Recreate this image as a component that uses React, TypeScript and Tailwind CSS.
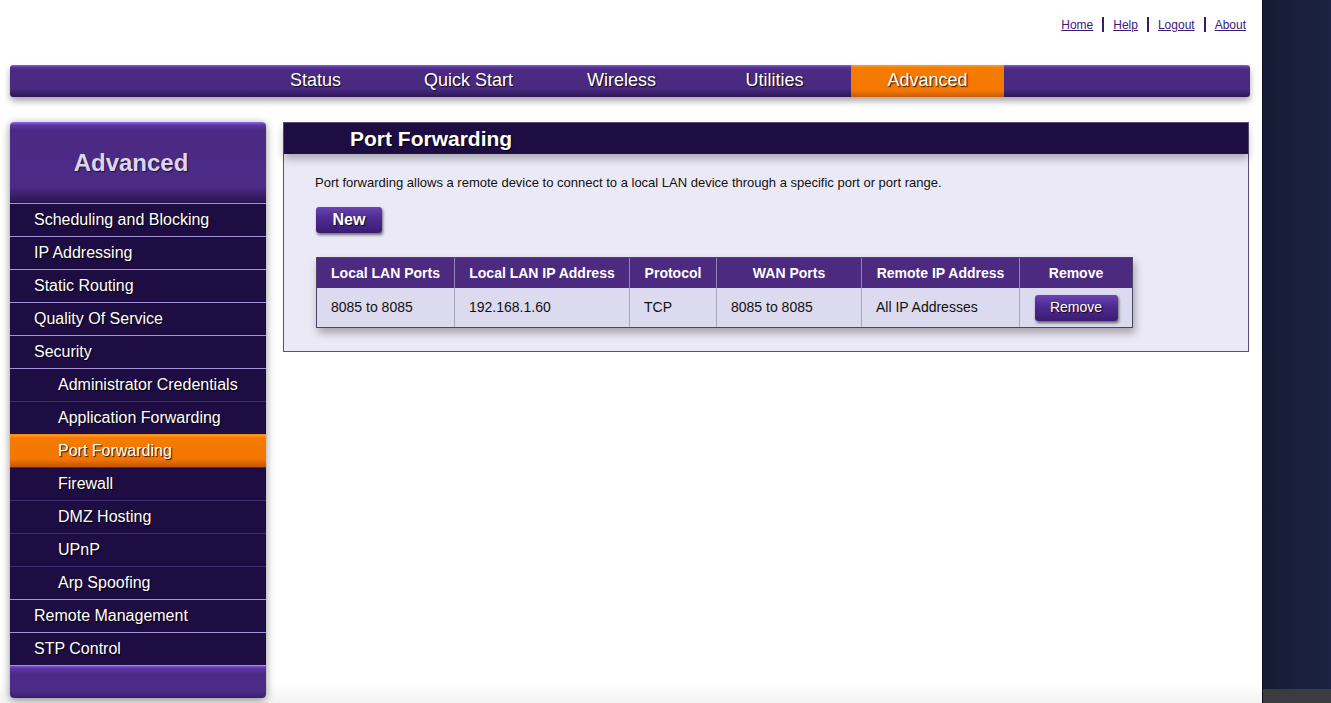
import React from "react";

type MenuItem = { label: string; sub?: boolean; active?: boolean };

const topLinks = ["Home", "Help", "Logout", "About"];

const tabs = ["Status", "Quick Start", "Wireless", "Utilities", "Advanced"];

const menu: MenuItem[] = [
  { label: "Scheduling and Blocking" },
  { label: "IP Addressing" },
  { label: "Static Routing" },
  { label: "Quality Of Service" },
  { label: "Security" },
  { label: "Administrator Credentials", sub: true },
  { label: "Application Forwarding", sub: true },
  { label: "Port Forwarding", sub: true, active: true },
  { label: "Firewall", sub: true },
  { label: "DMZ Hosting", sub: true },
  { label: "UPnP", sub: true },
  { label: "Arp Spoofing", sub: true },
  { label: "Remote Management" },
  { label: "STP Control" },
];

const columns = [
  { title: "Local LAN Ports", w: "w-[138px]" },
  { title: "Local LAN IP Address", w: "w-[175px]" },
  { title: "Protocol", w: "w-[87px]" },
  { title: "WAN Ports", w: "w-[145px]" },
  { title: "Remote IP Address", w: "w-[158px]" },
  { title: "Remove", w: "w-[112px]" },
];

const row = ["8085 to 8085", "192.168.1.60", "TCP", "8085 to 8085", "All IP Addresses"];

const shadowText = "[text-shadow:1px_1px_1px_rgba(0,0,0,0.85)]";

function PurpleButton({ label, className }: { label: string; className: string }) {
  return (
    <button
      className={`flex items-center justify-center rounded-[3px] bg-[linear-gradient(to_bottom,#6a44b4_0%,#4f2c92_40%,#3a1c70_100%)] text-white shadow-[1px_2px_3px_rgba(0,0,0,0.55)] ${shadowText} ${className}`}
    >
      {label}
    </button>
  );
}

function Sidebar() {
  return (
    <div className="w-[256px] rounded-[4px] shadow-[0_2px_8px_rgba(0,0,0,0.45)] flex flex-col">
      <div className="h-[81px] rounded-t-[4px] bg-[linear-gradient(to_bottom,#9466e6_0px,#5e36a6_3px,#4b2a84_8px,#4c2b86_80%,#2a1450_100%)] flex items-center justify-center pr-[14px]">
        <span className="text-[24px] font-bold text-[#ddd4ef] [text-shadow:1px_1px_1px_rgba(0,0,0,0.6)]">
          Advanced
        </span>
      </div>
      {menu.map((item, i) => {
        const prev = menu[i - 1];
        const light = !(item.sub && prev && prev.sub);
        const border = item.active
          ? "border-[#f08a18]"
          : light
          ? "border-[#a392d8]"
          : "border-[#3e2c6e]";
        const bg = item.active
          ? "bg-[linear-gradient(to_bottom,#ffa020_0px,#f57b00_3px,#f27600_75%,#c45600_100%)]"
          : "bg-[#1d0d42]";
        return (
          <div
            key={item.label}
            className={`h-[33px] border-t ${border} ${bg} flex items-center ${
              item.sub ? "pl-[48px]" : "pl-[24px]"
            } text-[16px] text-white ${shadowText}`}
          >
            {item.label}
          </div>
        );
      })}
      <div className="h-[33px] rounded-b-[4px] border-t border-[#a392d8] bg-[linear-gradient(to_bottom,#7a50c8_0px,#5a34a0_3px,#4c2b86_8px,#4c2b86_80%,#3a1f6c_100%)]" />
    </div>
  );
}

function PortForwardingPanel() {
  return (
    <div className="w-[966px] h-[230px] border border-[#5b5078] bg-[#ece9f6] flex flex-col">
      <div className="relative z-10 h-[31px] bg-[#1d0d42] pl-[66px] flex items-center shadow-[0_5px_8px_rgba(0,0,0,0.28)]">
        <span className={`text-[21px] font-bold text-white ${shadowText}`}>Port Forwarding</span>
      </div>
      <div className="pl-[31px] pt-[21px] flex flex-col items-start">
        <p className="text-[13px] leading-[15px] text-[#111]">
          Port forwarding allows a remote device to connect to a local LAN device through a specific port or port range.
        </p>
        <PurpleButton label="New" className="mt-[17px] ml-[1px] w-[66px] h-[26px] text-[16px] font-bold" />
        <div className="mt-[24px] ml-[1px] border border-[#4a4560] shadow-[2px_5px_8px_rgba(0,0,0,0.3)] flex flex-col">
          <div className="flex h-[30px] bg-[#4b2a80]">
            {columns.map((c, i) => (
              <div
                key={c.title}
                className={`${c.w} flex items-center justify-center text-[14px] font-bold text-white ${
                  i < columns.length - 1 ? "border-r border-[#8f86b0]" : ""
                }`}
              >
                {c.title}
              </div>
            ))}
          </div>
          <div className="flex h-[39px] bg-[#dcdaee]">
            {row.map((v, i) => (
              <div
                key={i}
                className={`${columns[i].w} flex items-center pl-[14px] text-[14px] text-[#111] border-r border-[#a9a6b8]`}
              >
                {v}
              </div>
            ))}
            <div className={`${columns[5].w} flex items-center justify-center`}>
              <PurpleButton label="Remove" className="w-[83px] h-[26px] text-[14px]" />
            </div>
          </div>
        </div>
      </div>
    </div>
  );
}

export default function App() {
  return (
    <div className="flex w-[1331px] h-[703px] overflow-hidden font-['Liberation_Sans',Arial,sans-serif]">
      <div className="w-[1262px] h-full bg-[linear-gradient(to_bottom,#ffffff_0%,#ffffff_97%,#f3f3f3_100%)] flex flex-col">
        {/* utility links */}
        <div className="h-[65px] flex justify-end items-start pt-[18px] pr-[16px] text-[12px] leading-[14px]">
          {topLinks.map((l, i) => (
            <React.Fragment key={l}>
              {i > 0 && <span className="mx-[9px] mt-[-1px] w-[2px] h-[15px] bg-[#3a1a70]" />}
              <a href="#" className="text-[#3c1a7a] underline">
                {l}
              </a>
            </React.Fragment>
          ))}
        </div>

        {/* main tabs */}
        <div className="ml-[10px] w-[1240px] h-[32px] rounded-[3px] bg-[linear-gradient(to_bottom,#8f64da_0px,#5a34a0_2px,#4b2a82_5px,#4a2a80_75%,#2c1654_100%)] shadow-[0_4px_6px_rgba(0,0,0,0.35)] flex pl-[229px]">
          {tabs.map((t) => (
            <div
              key={t}
              className={`w-[153px] h-full flex items-center justify-center pb-[2px] text-[18px] text-white ${shadowText} ${
                t === "Advanced"
                  ? "bg-[linear-gradient(to_bottom,#ff9d1e_0px,#f57b00_3px,#f47800_80%,#c95a00_100%)]"
                  : ""
              }`}
            >
              {t}
            </div>
          ))}
        </div>

        <div className="flex mt-[25px] ml-[10px] gap-[17px] items-start">
          <Sidebar />
          <PortForwardingPanel />
        </div>
      </div>

      {/* desktop edge */}
      <div className="flex-1 flex flex-col border-l border-[#0c0f1e]">
        <div className="flex-1 bg-[linear-gradient(to_right,#161b34,#1c2244)]" />
        <div className="h-[14px] bg-[#3b3b40]" />
      </div>
    </div>
  );
}
